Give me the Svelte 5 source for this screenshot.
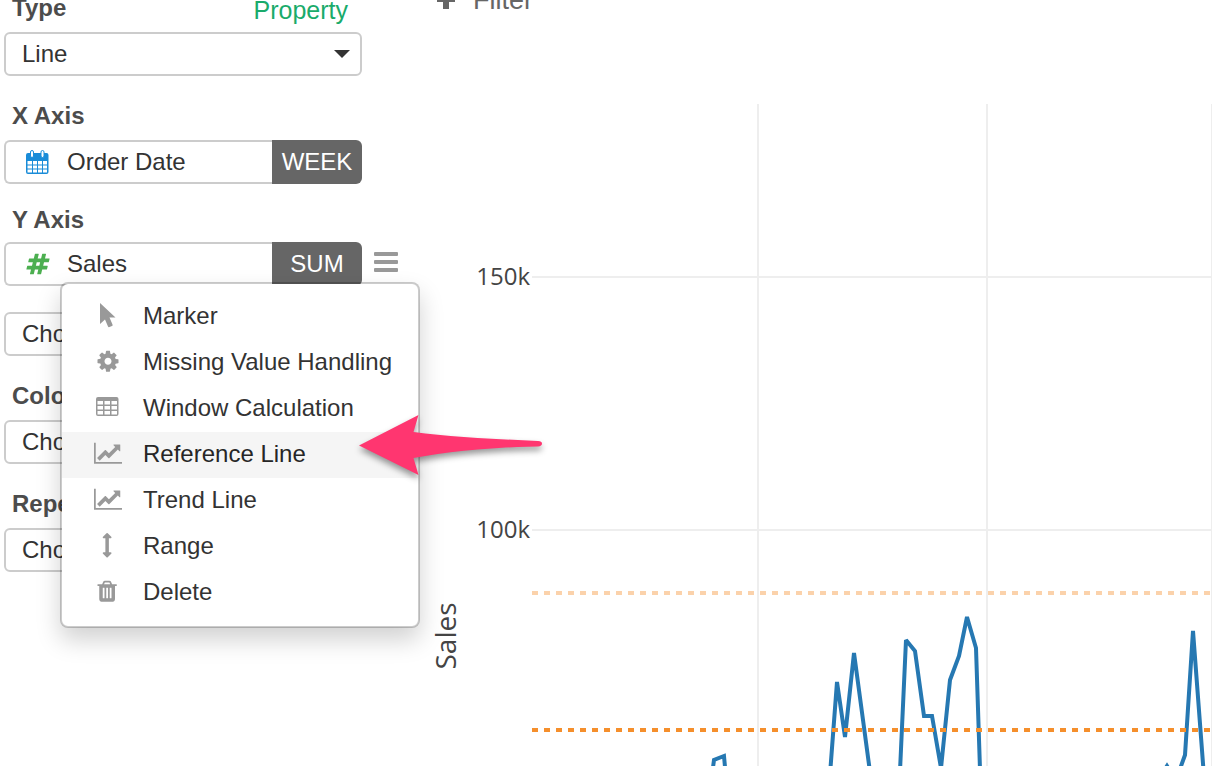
<script lang="ts">
  type Point = [number, number];

  const menuItems = [
    { label: 'Marker', icon: 'pointer' },
    { label: 'Missing Value Handling', icon: 'cog' },
    { label: 'Window Calculation', icon: 'table' },
    { label: 'Reference Line', icon: 'chart' },
    { label: 'Trend Line', icon: 'chart' },
    { label: 'Range', icon: 'range' },
    { label: 'Delete', icon: 'trash' }
  ];

  const yTicks = [
    { y: 277, label: '150k' },
    { y: 530, label: '100k' }
  ];
  const xGrid = [758, 987, 1212];

  const series: Point[] = [
    [640, 800], [710, 790], [714, 760], [724, 756], [728, 800], [822, 880],
    [837, 682], [845, 737], [854, 653], [870, 772], [884, 860], [895, 880],
    [906, 640], [915, 651], [924, 716], [932, 716], [941, 768], [950, 680],
    [959, 656], [967, 617], [976, 648], [981, 800], [1100, 860],
    [1158, 780], [1167, 766], [1176, 780], [1185, 755], [1193, 631], [1205, 790]
  ];

  let active = $state('Reference Line');
  let menuOpen = $state(true);

  const linePoints = $derived(series.map((p) => p.join(',')).join(' '));
</script>

{#snippet icon(name: string)}
  {#if name === 'pointer'}
    <svg class="menu-icon" viewBox="0 0 28 28" aria-hidden="true">
      <path d="M6 0v21l5-4.500 3 7q.5 1 1.500.5l2.500-1q1-.5.5-1.500l-3-7h6z" />
    </svg>
  {:else if name === 'cog'}
    <svg class="menu-icon" viewBox="-128 0 2048 2048" aria-hidden="true">
      <path d="M1152 896q0-106-75-181t-181-75-181 75-75 181 75 181 181 75 181-75 75-181zm512-109v222q0 12-8 23t-20 13l-185 28q-19 54-39 91 35 50 107 138 10 12 10 25t-9 23q-27 37-99 108t-94 71q-12 0-26-9l-138-108q-44 23-91 38-16 136-29 186-7 28-36 28h-222q-14 0-24.500-8.500t-11.500-21.500l-28-184q-49-16-90-37l-141 107q-10 9-25 9-14 0-25-11-126-114-165-168-7-10-7-23 0-12 8-23 15-21 51-66.500t54-70.500q-27-50-41-99l-183-27q-13-2-21-12.500t-8-23.500v-222q0-12 8-23t19-13l186-28q14-46 39-92-40-57-107-138-10-12-10-24 0-10 9-23 26-36 98.500-107.500t94.500-71.500q13 0 26 10l138 107q44-23 91-38 16-136 29-186 7-28 36-28h222q14 0 24.500 8.500t11.500 21.500l28 184q49 16 90 37l142-107q9-9 24-9 13 0 25 10 129 119 165 170 7 8 7 22 0 12-8 23-15 21-51 66.500t-54 70.500q26 50 41 98l183 28q13 2 21 12.500t8 23.500z" />
    </svg>
  {:else if name === 'table'}
    <svg class="menu-icon" viewBox="0 0 28 28" aria-hidden="true">
      <path fill-rule="evenodd" d="M4 2h18.500a2 2 0 0 1 2 2v15a2 2 0 0 1-2 2H4a2 2 0 0 1-2-2V4a2 2 0 0 1 2-2zM3.500 6v3.500h5.500V6zM10.500 6v3.500H16V6zM17.500 6v3.500H23V6zM3.500 11v3.500h5.500V11zM10.500 11v3.500H16V11zM17.500 11v3.500H23V11zM3.500 16v3.500h5.500V16zM10.500 16v3.500H16V16zM17.500 16v3.500H23V16z" />
    </svg>
  {:else if name === 'chart'}
    <svg class="menu-icon" viewBox="0 0 2048 2048" aria-hidden="true">
      <path d="M2048 1536v128h-2048v-1536h128v1408h1920zm-128-1248v435q0 21-19.500 29.500t-35.500-7.500l-121-121-633 633q-10 10-23 10t-23-10l-233-233-416 416-192-192 585-585q10-10 23-10t23 10l233 233 464-464-121-121q-16-16-7.500-35.500t29.500-19.500h435q14 0 23 9t9 23z" />
    </svg>
  {:else if name === 'range'}
    <svg class="menu-icon" viewBox="-64 0 2048 2048" aria-hidden="true">
      <path d="M1216 320q0 26-19 45t-45 19h-128v1024h128q26 0 45 19t19 45-19 45l-256 256q-19 19-45 19t-45-19l-256-256q-19-19-19-45t19-45 45-19h128v-1024h-128q-26 0-45-19t-19-45 19-45l256-256q19-19 45-19t45 19l256 256q19 19 19 45z" />
    </svg>
  {:else}
    <svg class="menu-icon" viewBox="-64 0 2048 2048" aria-hidden="true">
      <path d="M704 1376v-704q0-14-9-23t-23-9h-64q-14 0-23 9t-9 23v704q0 14 9 23t23 9h64q14 0 23-9t9-23zm256 0v-704q0-14-9-23t-23-9h-64q-14 0-23 9t-9 23v704q0 14 9 23t23 9h64q14 0 23-9t9-23zm256 0v-704q0-14-9-23t-23-9h-64q-14 0-23 9t-9 23v704q0 14 9 23t23 9h64q14 0 23-9t9-23zm-544-992h448l-48-117q-7-9-17-11h-317q-10 2-17 11zm928 32v64q0 14-9 23t-23 9h-96v948q0 83-47 143.500t-113 60.500h-832q-66 0-113-58.500t-47-141.500v-952h-96q-14 0-23-9t-9-23v-64q0-14 9-23t23-9h309l70-167q15-37 54-63t79-26h320q40 0 79 26t54 63l70 167h309q14 0 23 9t9 23z" />
    </svg>
  {/if}
{/snippet}

<div class="page">
  <aside class="sidebar">
    <div class="type-head">
      <label for="chart-type">Type</label>
      <a class="property" href="#property">Property</a>
    </div>
    <div class="select-wrap">
      <select id="chart-type" class="field">
        <option>Line</option>
        <option>Bar</option>
        <option>Area</option>
      </select>
      <svg class="caret" viewBox="0 0 16 8" aria-hidden="true"><path d="M0 0h16L8 8z" /></svg>
    </div>

    <section class="group">
      <label for="x-column">X Axis</label>
      <div class="column-row">
        <button id="x-column" class="field column">
          <svg class="column-icon date" viewBox="0 0 24 24" aria-hidden="true">
            <path fill-rule="evenodd" d="M2 3h18.500a2 2 0 0 1 2 2v17a2 2 0 0 1-2 2H2a2 2 0 0 1-2-2V5a2 2 0 0 1 2-2zM1.500 11v3.500H6V11zM7 11v3.500h4V11zM12 11v3.500h4V11zM17 11v3.500h4V11zM1.500 15.500v3H6v-3zM7 15.500v3h4v-3zM12 15.500v3h4v-3zM17 15.500v3h4v-3zM1.500 19.500v3H6v-3zM7 19.500v3h4v-3zM12 19.500v3h4v-3zM17 19.500v3h4v-3z" />
            <rect class="ring" x="4.500" y=".5" width="3" height="7" rx="1.500" />
            <rect class="ring" x="15" y=".5" width="3" height="7" rx="1.500" />
          </svg>
          Order Date
        </button>
        <button class="badge">WEEK</button>
      </div>
    </section>

    <section class="group y-axis">
      <label for="y-column">Y Axis</label>
      <div class="column-row">
        <button id="y-column" class="field column">
          <svg class="column-icon number" viewBox="0 0 1792 1792" aria-hidden="true">
            <path d="M991 1024l64-256h-254l-64 256h254zm768-504l-56 224q-7 24-31 24h-327l-64 256h311q15 0 25 12 10 14 6 28l-56 224q-5 24-31 24h-327l-81 328q-7 24-31 24h-224q-16 0-26-12-9-12-6-28l78-312h-254l-81 328q-7 24-31 24h-225q-15 0-25-12-9-12-6-28l78-312h-311q-15 0-25-12-9-12-6-28l56-224q7-24 31-24h327l64-256h-311q-15 0-25-12-10-14-6-28l56-224q5-24 31-24h327l81-328q7-24 32-24h224q15 0 25 12 9 12 6 28l-78 312h254l81-328q7-24 32-24h224q15 0 25 12 9 12 6 28l-78 312h311q15 0 25 12 9 12 6 28z" />
          </svg>
          Sales
        </button>
        <button class="badge">SUM</button>
        <button class="menu-toggle" aria-label="Column menu" onclick={() => (menuOpen = !menuOpen)}>
          <svg viewBox="0 0 24 20" aria-hidden="true">
            <rect width="24" height="4" rx="1" />
            <rect y="8" width="24" height="4" rx="1" />
            <rect y="16" width="24" height="4" rx="1" />
          </svg>
        </button>
      </div>

      {#if menuOpen}
        <ul class="menu">
          {#each menuItems as item (item.label)}
            <li>
              <button
                class="menu-item"
                class:active={active === item.label}
                onclick={() => (active = item.label)}
              >
                {@render icon(item.icon)}
                <span>{item.label}</span>
              </button>
            </li>
          {/each}
        </ul>
        <svg class="arrow" viewBox="0 0 200 80" aria-hidden="true">
          <path d="M5 37.500L64.500 7 59.500 24C95 29 140 31 184 33Q188 33 188 35.500T184 38.500C140 39 95 43 59.500 50L64.500 67z" />
        </svg>
      {/if}
    </section>

    <div class="extra">
      <select class="field" aria-label="Second Y axis column"><option>Choose Column</option></select>
    </div>

    <section class="group">
      <label for="color-column">Color By</label>
      <select id="color-column" class="field"><option>Choose Column</option></select>
    </section>

    <section class="group">
      <label for="repeat-column">Repeat By</label>
      <select id="repeat-column" class="field"><option>Choose Column</option></select>
    </section>
  </aside>

  <main class="content">
    <button class="filter">
      <svg viewBox="0 0 18 18" aria-hidden="true"><path d="M6 0h6v7h6v4h-6v7H6v-7H0V7h6z" /></svg>
      Filter
    </button>
    <svg class="chart" viewBox="420 16 792 750" preserveAspectRatio="xMinYMin meet" role="img" aria-label="Sales by week">
      {#each yTicks as tick (tick.y)}
        <line class="grid" x1="532" x2="1212" y1={tick.y} y2={tick.y} />
        <text class="tick" x="530" y={tick.y + 8}>{tick.label}</text>
      {/each}
      {#each xGrid as x (x)}
        <line class="grid" x1={x} x2={x} y1="104" y2="766" />
      {/each}
      <text class="axis-title" transform="translate(456 636) rotate(-90)">Sales</text>
      <polyline class="series" points={linePoints} />
      <line class="reference band" x1="532" x2="1210" y1="593" y2="593" />
      <line class="reference" x1="532" x2="1210" y1="730" y2="730" />
    </svg>
  </main>
</div>

<style>
  :global(body) {
    margin: 0;
    background: #fff;
  }

  .page {
    display: flex;
    height: 100vh;
    overflow: hidden;
    color: #333;
    font-family: 'Liberation Sans', Arial, sans-serif;
    font-size: 24px;
  }

  button,
  select {
    margin: 0;
    font: inherit;
    color: inherit;
    cursor: pointer;
  }

  .sidebar {
    flex: none;
    box-sizing: border-box;
    width: 420px;
    padding-left: 4px;
  }

  .content {
    flex: 1;
    min-width: 0;
  }

  label {
    padding-left: 8px;
    color: #4c4c4c;
    font-weight: bold;
    line-height: 24px;
  }

  .type-head {
    display: flex;
    justify-content: space-between;
    align-items: flex-end;
    width: 344px;
    height: 24px;
    margin-top: -4px;
    margin-bottom: 12px;
  }

  .type-head label {
    align-self: flex-start;
  }

  .property {
    color: #1aab6b;
    font-size: 25px;
    line-height: 20px;
    text-decoration: none;
  }

  .select-wrap {
    display: flex;
    align-items: center;
    width: 358px;
  }

  .field {
    display: block;
    box-sizing: border-box;
    width: 358px;
    height: 44px;
    padding: 0 16px;
    border: 2px solid #ccc;
    border-radius: 6px;
    background: #fff;
    appearance: none;
    text-align: left;
  }

  select.field {
    padding-bottom: 2px;
  }

  .caret {
    width: 16px;
    height: 8px;
    margin-left: -28px;
    fill: #333;
    pointer-events: none;
  }

  .group {
    display: flex;
    flex-direction: column;
    gap: 12px;
    margin-top: 28px;
  }

  .y-axis {
    position: relative;
    gap: 10px;
    margin-top: 24px;
  }

  .extra {
    margin-top: 26px;
  }

  .column-row {
    display: flex;
    align-items: center;
  }

  .column {
    display: flex;
    align-items: center;
    gap: 17px;
    width: 268px;
    padding-left: 20px;
    border-right: 0;
    border-radius: 6px 0 0 6px;
  }

  .column-icon {
    width: 24px;
    height: 24px;
  }

  .date {
    fill: #1a8cd8;
  }

  .number {
    fill: #4caf50;
  }

  .ring {
    fill: #fff;
    stroke: #1a8cd8;
  }

  .badge {
    width: 90px;
    height: 44px;
    padding: 0;
    border: 0;
    border-radius: 0 6px 6px 0;
    background: #666;
    color: #fff;
  }

  .menu-toggle {
    display: flex;
    margin-left: 12px;
    padding: 0 0 4px;
    border: 0;
    background: none;
  }

  .menu-toggle svg {
    width: 24px;
    height: 20px;
    fill: #999;
  }

  .menu {
    position: absolute;
    z-index: 2;
    top: 74px;
    left: 56px;
    box-sizing: border-box;
    width: 360px;
    margin: 0;
    padding: 10px 0;
    border: 2px solid rgba(0, 0, 0, 0.2);
    border-radius: 8px;
    background: #fff;
    background-clip: padding-box;
    box-shadow: 0 12px 24px rgba(0, 0, 0, 0.18);
    list-style: none;
  }

  .menu-item {
    display: flex;
    align-items: center;
    gap: 21px;
    width: 100%;
    height: 46px;
    padding: 0 0 2px 32px;
    border: 0;
    background: none;
    text-align: left;
    white-space: nowrap;
  }

  .menu-item.active,
  .menu-item:hover {
    background: #f5f5f5;
    color: #262626;
  }

  .menu-icon {
    flex: none;
    width: 28px;
    height: 28px;
    margin-top: 2px;
    fill: #999;
  }

  .arrow {
    position: absolute;
    z-index: 3;
    top: 200px;
    left: 350px;
    width: 200px;
    height: 80px;
    fill: #ff3670;
    filter: drop-shadow(0 4px 3px rgba(0, 0, 0, 0.4));
    pointer-events: none;
  }

  .filter {
    display: flex;
    align-items: center;
    gap: 18px;
    height: 32px;
    margin-top: -16px;
    padding: 0 0 0 17px;
    border: 0;
    background: none;
    color: #666;
    font-size: 27px;
  }

  .filter svg {
    width: 18px;
    height: 18px;
    fill: #666;
  }

  .chart {
    display: block;
    width: 100%;
    fill: #444;
    font-family: 'Open Sans', sans-serif;
  }

  .tick {
    font-size: 24px;
    text-anchor: end;
  }

  .axis-title {
    font-size: 28px;
    text-anchor: middle;
  }

  .grid {
    stroke: #eee;
    stroke-width: 2;
  }

  .series {
    fill: none;
    stroke: #2678b2;
    stroke-width: 4;
    stroke-miterlimit: 2;
  }

  .reference {
    stroke: #f58f2c;
    stroke-width: 4;
    stroke-dasharray: 6 6;
  }

  .band {
    stroke: #fbd2ab;
  }
</style>
